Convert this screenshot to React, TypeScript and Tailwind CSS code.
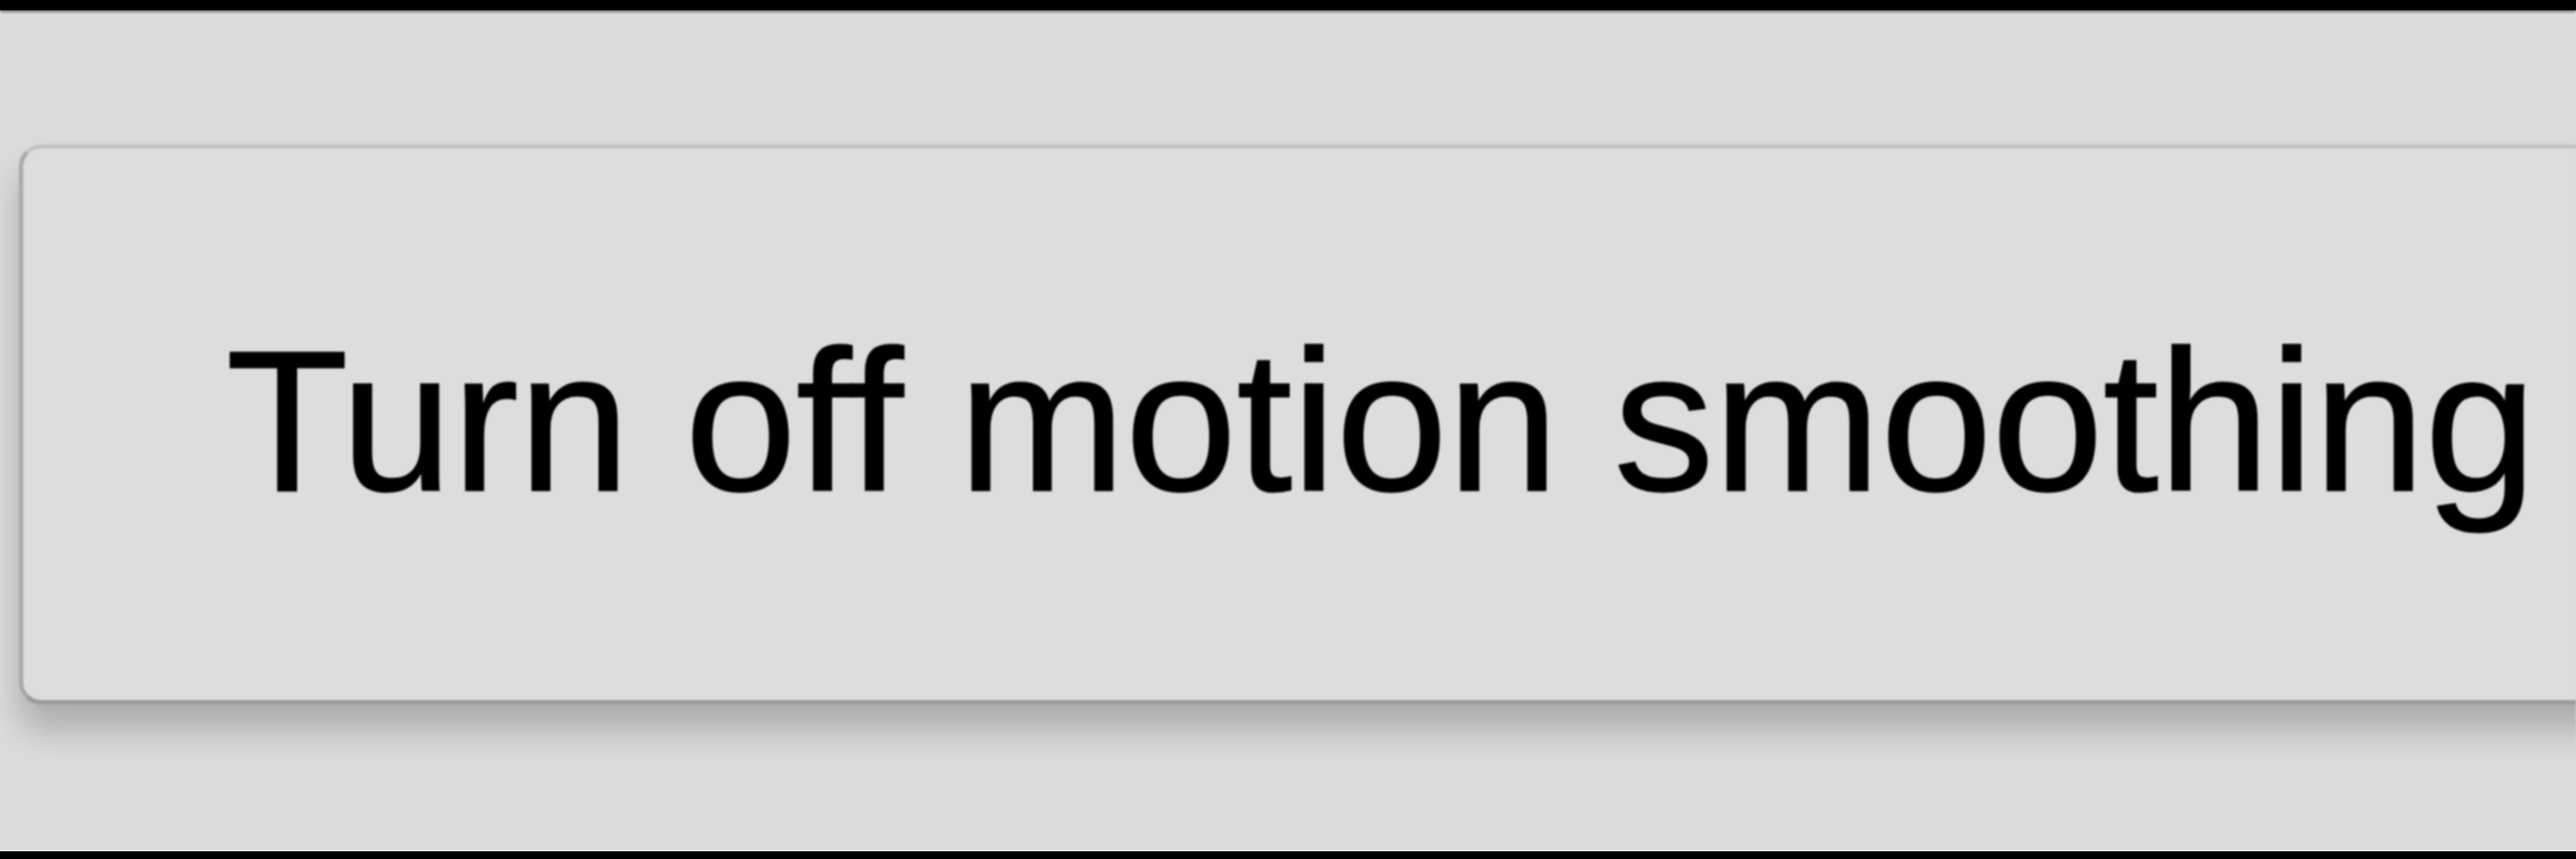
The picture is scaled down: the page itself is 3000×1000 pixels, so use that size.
import React from 'react';

export default function App() {
  return (
    <div
      className="w-[3000px] h-[1000px] flex flex-col overflow-hidden bg-[#dcdcdc]"
      style={{ fontFamily: '"Liberation Sans", Arial, sans-serif' }}
    >
      <div className="h-[12px] shrink-0 bg-black shadow-[0_2px_3px_rgba(0,0,0,0.5)]" />
      <main className="flex-1 overflow-hidden pt-[156px] pl-[22px] blur-[1px]">
        <button
          type="button"
          className="box-border w-[3100px] h-[652px] flex items-start pt-[200px] pl-[236px] rounded-[26px] bg-[#dddddd] border-[5px] border-t-[#c3c3c3] border-l-[#a9a9a9] border-b-[#9a9a9a] border-r-[#a9a9a9] shadow-[0_30px_40px_rgba(0,0,0,0.22)] text-left"
        >
          <span className="text-[234px] leading-none text-black whitespace-nowrap tracking-[-0.6px] [font-variant-ligatures:none] [-webkit-text-stroke:1.5px_black]">
            Turn off motion smoothing
          </span>
        </button>
      </main>
      <div className="h-[12px] shrink-0 bg-black border-t-[3px] border-[#e6e6e6]" />
    </div>
  );
}
